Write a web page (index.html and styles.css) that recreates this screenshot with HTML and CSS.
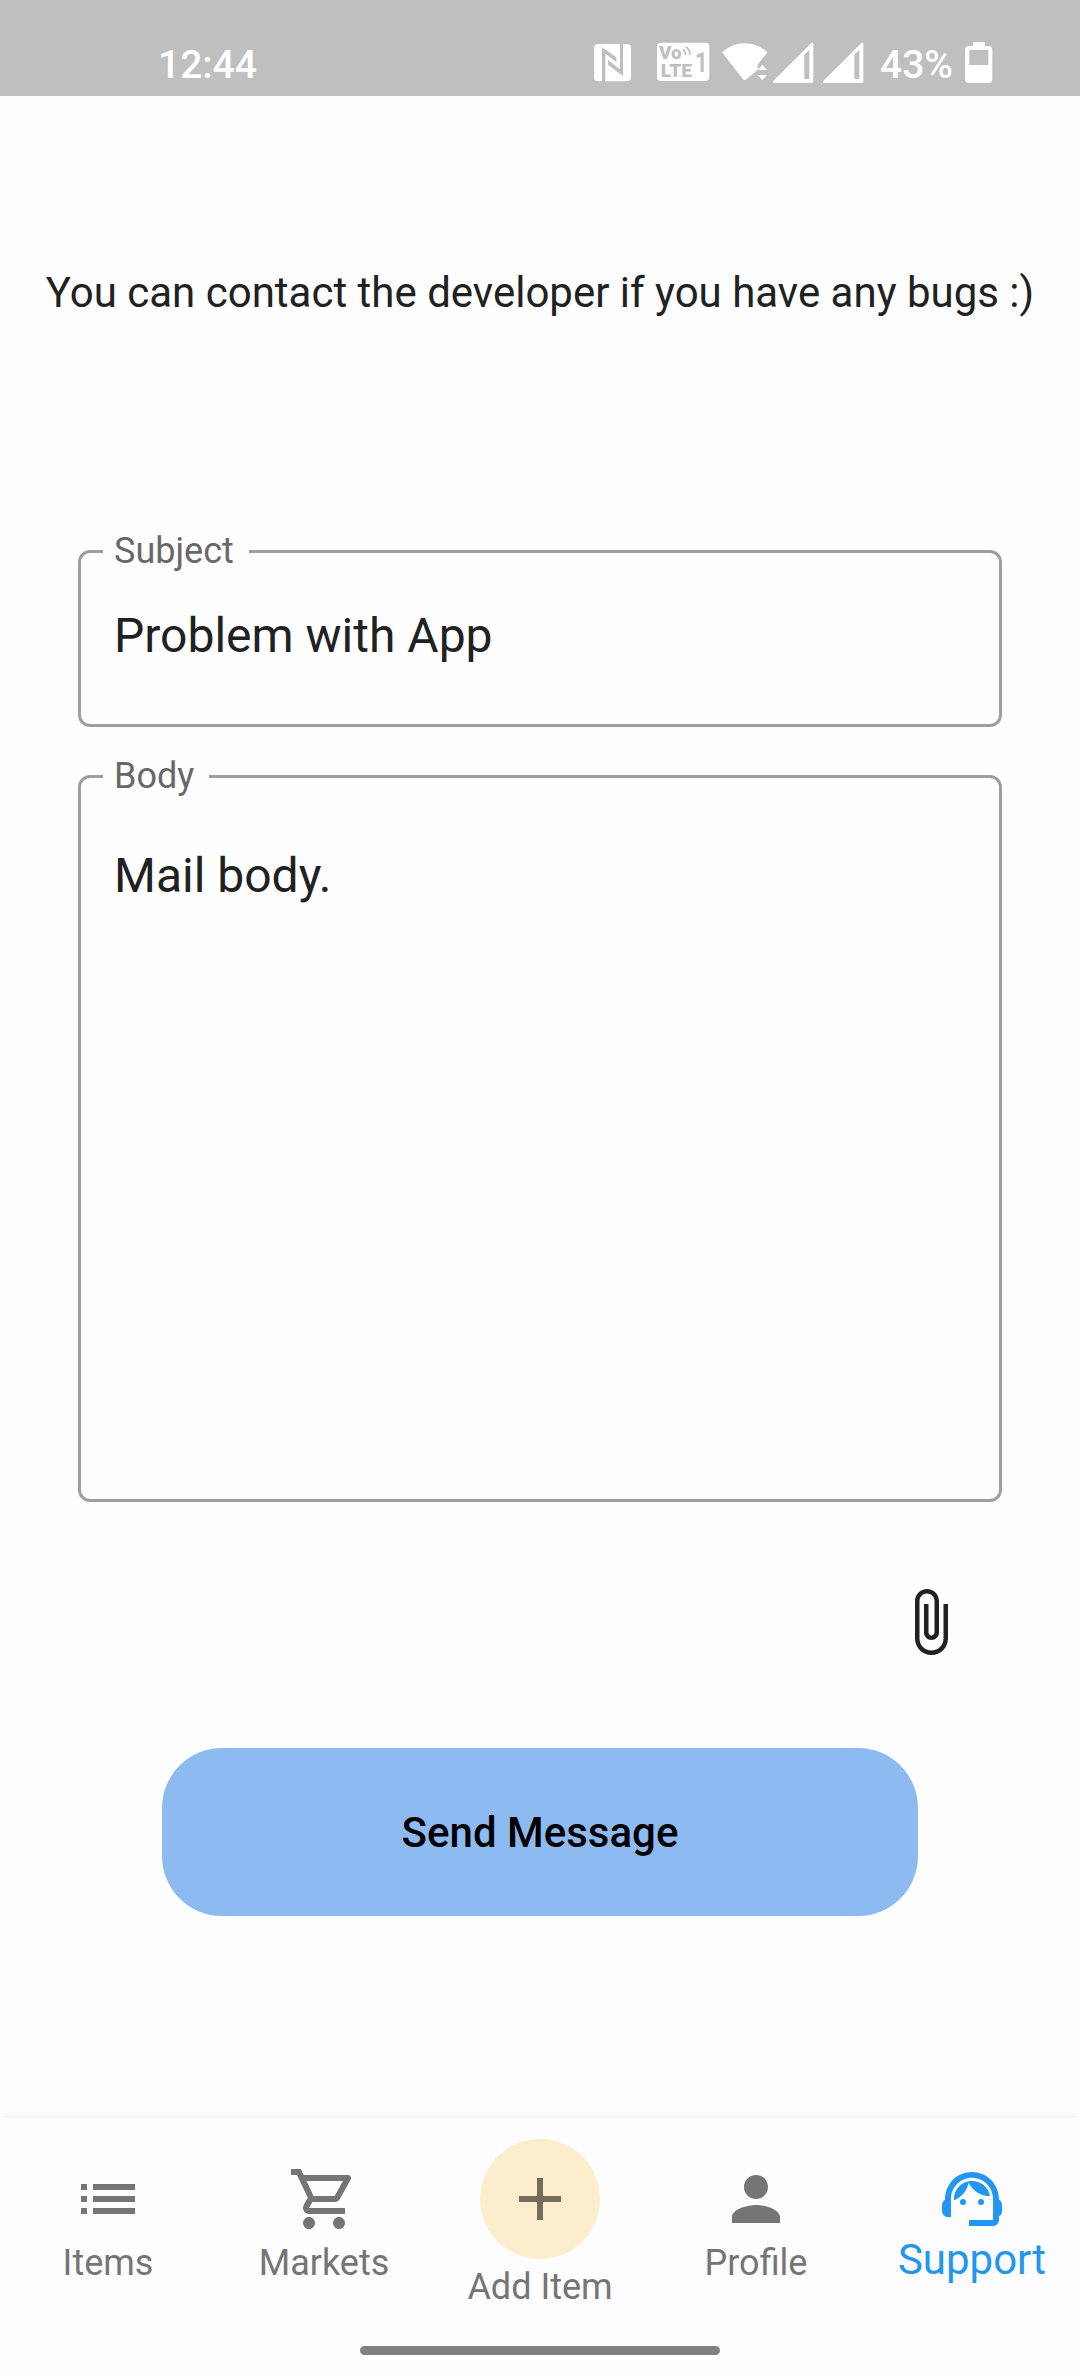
FILE: index.html
```html
<!DOCTYPE html>
<html lang="en">
<head>
<meta charset="utf-8">
<title>Support</title>
<link rel="stylesheet" href="styles.css">
</head>
<body>
<header class="status">
  <span class="clock">12:44</span>
  <svg class="ind nfc" width="38" height="44" viewBox="72 60 114 132"><rect x="72" y="72" width="111" height="112" rx="12"/><g class="cut"><path d="M96 186V82L139 112V126L106 101V186z"/><path d="M159 70V168L114 134V120L150 148V70z"/></g></svg>
  <svg class="ind volte" width="53" height="44" viewBox="260 60 159 132"><rect x="260" y="68" width="157" height="115" rx="12"/><g class="cut"><text x="266" y="118" font-size="54" textLength="68" lengthAdjust="spacingAndGlyphs">Vo</text><text x="271" y="170" font-size="55" textLength="94" lengthAdjust="spacingAndGlyphs">LTE</text><text class="sim" x="374" y="155" font-size="82" textLength="38" lengthAdjust="spacingAndGlyphs">1</text></g><path class="wave" d="M337 88q9 6 9 17M346 80q13 8 13 25"/></svg>
  <svg class="ind wifi" width="46" height="44" viewBox="456 60 138 132"><path d="M456 97Q486 70 524 70T592 97L563 134V150L529 178Q524 183 519 178zM577 134l14 16h-28zM563 165h28l-14 16z"/></svg>
  <svg class="ind sig1" width="41" height="44" viewBox="608 60 123 132"><path fill-rule="evenodd" d="M608 184L723 69Q729 66 729 72V184Q729 189 724 189H612Q607 189 608 184zM702 104V177H717V90z"/></svg>
  <svg class="ind sig2" width="41" height="44" viewBox="608 60 123 132"><path fill-rule="evenodd" d="M608 184L723 69Q729 66 729 72V184Q729 189 724 189H612Q607 189 608 184zM702 104V177H717V90z"/></svg>
  <span class="percent">43%</span>
  <svg class="ind battery" width="28" height="44" viewBox="1181 60 84 132"><path fill-rule="evenodd" d="M1205 78V70q0-4 4-4h28q4 0 4 4v8h11q11 0 11 11v89q0 11-11 11h-59q-12 0-12-11V89q0-11 12-11zM1194 90v45h57V90z"/></svg>
</header>
<main class="page">
  <p class="intro">You can contact the developer if you have any bugs :)</p>
  <form class="form">
    <fieldset class="field subject"><legend>Subject</legend><div class="value">Problem with App</div></fieldset>
    <fieldset class="field message"><legend>Body</legend><div class="value">Mail body.</div></fieldset>
    <svg class="attach" viewBox="0 0 24 24"><path d="M16.5 6v11.5c0 2.21-1.79 4-4 4s-4-1.79-4-4V5c0-1.38 1.12-2.5 2.5-2.5s2.5 1.12 2.5 2.5v10.5c0 .55-.45 1-1 1s-1-.45-1-1V6H10v9.5c0 1.38 1.12 2.5 2.5 2.5s2.5-1.12 2.5-2.5V5c0-2.21-1.79-4-4-4S7 2.79 7 5v12.5c0 3.04 2.46 5.5 5.5 5.5s5.5-2.46 5.5-5.5V6h-1.5z"/></svg>
    <button class="send" type="button">Send Message</button>
  </form>
</main>
<nav class="nav">
  <a class="item"><svg class="icon" viewBox="0 0 24 24"><path d="M3 13h2v-2H3v2zm0 4h2v-2H3v2zm0-8h2V7H3v2zm4 4h14v-2H7v2zm0 4h14v-2H7v2zM7 7v2h14V7H7z"/></svg><span>Items</span></a>
  <a class="item"><svg class="icon" viewBox="0 0 24 24"><path d="M15.55 13c.75 0 1.41-.41 1.75-1.03l3.58-6.49c.37-.66-.11-1.48-.87-1.48H5.21l-.94-2H1v2h2l3.6 7.59-1.35 2.44C4.52 15.37 5.48 17 7 17h12v-2H7l1.1-2h7.45zM6.16 6h12.15l-2.76 5H8.53L6.16 6zM7 18c-1.1 0-1.99.9-1.99 2S5.9 22 7 22s2-.9 2-2-.9-2-2-2zm10 0c-1.1 0-1.99.9-1.99 2s.89 2 1.99 2 2-.9 2-2-.9-2-2-2z"/></svg><span>Markets</span></a>
  <a class="item add"><div class="disc"><svg class="icon" viewBox="0 0 24 24"><path d="M19 13h-6v6h-2v-6H5v-2h6V5h2v6h6v2z"/></svg></div><span>Add Item</span></a>
  <a class="item"><svg class="icon" viewBox="0 0 24 24"><path d="M12 12c2.21 0 4-1.79 4-4s-1.79-4-4-4-4 1.79-4 4 1.79 4 4 4zm0 2c-2.67 0-8 1.34-8 4v2h16v-2c0-2.66-5.33-4-8-4z"/></svg><span>Profile</span></a>
  <a class="item active"><svg class="icon" viewBox="0 0 24 24"><path d="M21 12.22C21 6.73 16.74 3 12 3c-4.69 0-9 3.65-9 9.28-.6.34-1 .98-1 1.72v2c0 1.1.9 2 2 2h1v-6.1c0-3.87 3.13-7 7-7s7 3.13 7 7V19h-8v2h8c1.1 0 2-.9 2-2v-1.22c.59-.31 1-.92 1-1.64v-2.3c0-.7-.41-1.31-1-1.62z"/><circle cx="9" cy="13" r="1"/><circle cx="15" cy="13" r="1"/><path d="M18 11.03C17.52 8.18 15.04 6 12.05 6c-3.03 0-6.29 2.51-6.03 6.45 2.47-1.01 4.33-3.21 4.86-5.89 1.31 2.63 4 4.44 7.12 4.47z"/></svg><span>Support</span></a>
</nav>
<footer class="gesture"><div class="handle"></div></footer>
</body>
</html>
```
FILE: styles.css
```css
* { box-sizing: border-box; }
body {
  margin: 0;
  width: 1080px;
  height: 2376px;
  display: flex;
  flex-direction: column;
  background: #fefefe;
  color: #212121;
  font-family: Roboto, sans-serif;
  overflow: hidden;
}
svg { display: block; flex: none; }

.status {
  height: 96px;
  padding: 40px 0 0 158px;
  display: flex;
  background: #bfbfbf;
  color: #fff;
  font-size: 39px;
  font-weight: 500;
  line-height: 50px;
  white-space: nowrap;
}
.clock { width: 436px; }
.ind { fill: #fff; }
.cut { fill: #bfbfbf; font-weight: 900; }
.sim { font-weight: 700; }
.wave { fill: none; stroke: #bfbfbf; stroke-width: 5; }
.volte { margin-left: 25px; }
.wifi { margin-left: 12px; }
.sig1 { margin-left: 5px; }
.sig2 { margin-left: 9px; }
.percent { width: 85px; margin-left: 16px; }

.page { height: 2022px; }
.intro {
  margin: 0;
  padding-top: 173px;
  height: 436px;
  font-size: 42px;
  line-height: 48px;
  text-align: center;
  white-space: nowrap;
}
.form { padding: 0 78px; display: flex; flex-direction: column; }
.field {
  margin: 0;
  padding: 0 33px;
  border: 3px solid #9e9e9e;
  border-radius: 12px;
}
.subject { height: 195px; }
.message { height: 745px; margin-top: 30px; }
legend {
  margin-left: -11px;
  padding: 1px 15px 2px 11px;
  height: 39px;
  font-size: 36px;
  line-height: 36px;
  color: #686868;
}
.value { font-size: 48px; line-height: 56px; }
.subject .value { padding-top: 37px; }
.message .value { padding-top: 52px; }
.attach { width: 72px; height: 72px; margin: 84px 36px 0 0; align-self: flex-end; fill: #212121; }
.send {
  align-self: center;
  width: 756px;
  height: 168px;
  margin-top: 90px;
  padding: 2px 0 0;
  border: 0;
  border-radius: 60px;
  background: #8dbbf1;
  color: #000;
  font: 500 42px/48px Roboto, sans-serif;
}

.nav {
  height: 209px;
  display: grid;
  grid-template-columns: repeat(5, 216px);
  background: #fdfdff;
  box-shadow: 0 -1px 9px rgba(0, 0, 0, 0.07);
  color: #757575;
  font-size: 36px;
  line-height: 42px;
}
.item { padding-top: 45px; display: flex; flex-direction: column; align-items: center; }
.icon { width: 72px; height: 72px; fill: #757575; }
.item span { margin-top: 7px; white-space: nowrap; }
.add { padding-top: 21px; }
.disc {
  width: 120px;
  height: 120px;
  border-radius: 50%;
  background: #fceecd;
  display: flex;
  align-items: center;
  justify-content: center;
}
.disc .icon { fill: #746c5d; }
.active { color: #2196f3; font-size: 42px; }
.active .icon { fill: #2196f3; }
.active span { margin-top: 4px; }
.gesture { flex: 1; padding-top: 19px; background: #fefefe; }
.handle { width: 360px; height: 9px; margin: 0 auto; border-radius: 5px; background: #808080; }
```
